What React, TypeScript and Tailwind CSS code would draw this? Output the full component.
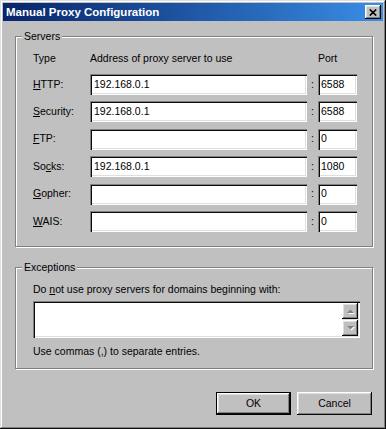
import React from 'react';

// Win2000-style bevels
const sunken =
  'shadow-[inset_1px_1px_#808080,inset_2px_2px_#0a0a0a,inset_-1px_-1px_#fff,inset_-2px_-2px_#dfdfdf]';
const raised =
  'shadow-[inset_-1px_-1px_#0a0a0a,inset_1px_1px_#fff,inset_-2px_-2px_#808080,inset_2px_2px_#dfdfdf]';
const etched = 'border border-[#808080] shadow-[inset_1px_1px_#fff,1px_1px_#fff]';

type Row = { pre: string; key: string; post: string; host: string; port: string };

const rows: Row[] = [
  { pre: '', key: 'H', post: 'TTP:', host: '192.168.0.1', port: '6588' },
  { pre: '', key: 'S', post: 'ecurity:', host: '192.168.0.1', port: '6588' },
  { pre: '', key: 'F', post: 'TP:', host: '', port: '0' },
  { pre: 'So', key: 'c', post: 'ks:', host: '192.168.0.1', port: '1080' },
  { pre: '', key: 'G', post: 'opher:', host: '', port: '0' },
  { pre: '', key: 'W', post: 'AIS:', host: '', port: '0' },
];

function Arrow({ up }: { up?: boolean }) {
  return (
    <svg width="9" height="6" viewBox="0 0 9 6">
      {up ? (
        <>
          <path d="M1 5h7L4.5 1.5z" fill="#fff" transform="translate(1 1)" />
          <path d="M1 5h7L4.5 1.5z" fill="#808080" />
        </>
      ) : (
        <>
          <path d="M1 1h7L4.5 4.5z" fill="#fff" transform="translate(1 1)" />
          <path d="M1 1h7L4.5 4.5z" fill="#808080" />
        </>
      )}
    </svg>
  );
}

export default function App() {
  return (
    <div
      className={`w-[386px] h-[429px] bg-[#c0c0c0] p-[3px] flex flex-col text-black text-[10.5px] font-['Liberation_Sans',Arial,sans-serif] shadow-[inset_-1px_-1px_#0a0a0a,inset_1px_1px_#dfdfdf,inset_-2px_-2px_#808080,inset_2px_2px_#fff]`}
    >
      {/* Title bar */}
      <div className="h-[18px] shrink-0 flex items-center bg-linear-to-r from-[#0a246a] to-[#3a8ee6]">
        <span className="pl-[3px] text-white font-bold text-[11.5px] leading-[18px]">
          Manual Proxy Configuration
        </span>
        <div className={`ml-auto mr-[2px] w-[16px] h-[14px] bg-[#c0c0c0] flex items-center justify-center ${raised}`}>
          <svg width="8" height="7" viewBox="0 0 8 7">
            <path d="M0.8 0.5L7.2 6.5M7.2 0.5L0.8 6.5" stroke="#000" strokeWidth="1.7" />
          </svg>
        </div>
      </div>

      {/* Servers */}
      <fieldset className={`mt-[9px] ml-[12px] w-[358px] ${etched}`}>
        <legend className="ml-[6px] px-[2px] bg-[#c0c0c0] leading-[13px]">Servers</legend>
        <div className="pl-[17px] pt-[9px] pb-[14px]">
          <div className="flex h-[13px] leading-[13px]">
            <span className="w-[57px]">Type</span>
            <span className="w-[228px]">Address of proxy server to use</span>
            <span>Port</span>
          </div>
          <div className="mt-[9px] flex flex-col gap-[6.4px]">
            {rows.map((r) => (
              <div key={r.post} className="flex items-center h-[21px]">
                <span className="w-[57px]">
                  {r.pre}
                  <span className="underline underline-offset-[1px]">{r.key}</span>
                  {r.post}
                </span>
                <div className={`w-[217px] h-[21px] bg-white px-[4px] flex items-center ${sunken}`}>{r.host}</div>
                <span className="w-[11px] text-center">:</span>
                <div className={`w-[39px] h-[21px] bg-white px-[3px] flex items-center ${sunken}`}>{r.port}</div>
              </div>
            ))}
          </div>
        </div>
      </fieldset>

      {/* Exceptions */}
      <fieldset className={`mt-[14px] ml-[12px] w-[358px] ${etched}`}>
        <legend className="ml-[6px] px-[2px] bg-[#c0c0c0] leading-[13px]">Exceptions</legend>
        <div className="pl-[17px] pt-[9px] pb-[10px]">
          <p className="leading-[13px]">
            Do <span className="underline underline-offset-[1px]">n</span>ot use proxy servers for domains beginning with:
          </p>
          <div className={`mt-[5px] w-[327px] h-[37px] bg-white p-[2px] flex ${sunken}`}>
            <div className="flex-1" />
            <div className="w-[16px] flex flex-col bg-[#e0e0e0]">
              <div className={`h-[16px] bg-[#c0c0c0] flex items-center justify-center ${raised}`}>
                <Arrow up />
              </div>
              <div className="flex-1" />
              <div className={`h-[16px] bg-[#c0c0c0] flex items-center justify-center ${raised}`}>
                <Arrow />
              </div>
            </div>
          </div>
          <p className="mt-[7px] leading-[13px]">Use commas (,) to separate entries.</p>
        </div>
      </fieldset>

      {/* Buttons */}
      <div className="mt-[23px] mr-[11px] flex justify-end gap-[6px]">
        <button className="w-[75px] h-[23px] border border-black bg-[#c0c0c0]">
          <div className={`h-full flex items-center justify-center ${raised}`}>OK</div>
        </button>
        <button className={`w-[75px] h-[23px] bg-[#c0c0c0] flex items-center justify-center ${raised}`}>
          Cancel
        </button>
      </div>
    </div>
  );
}
